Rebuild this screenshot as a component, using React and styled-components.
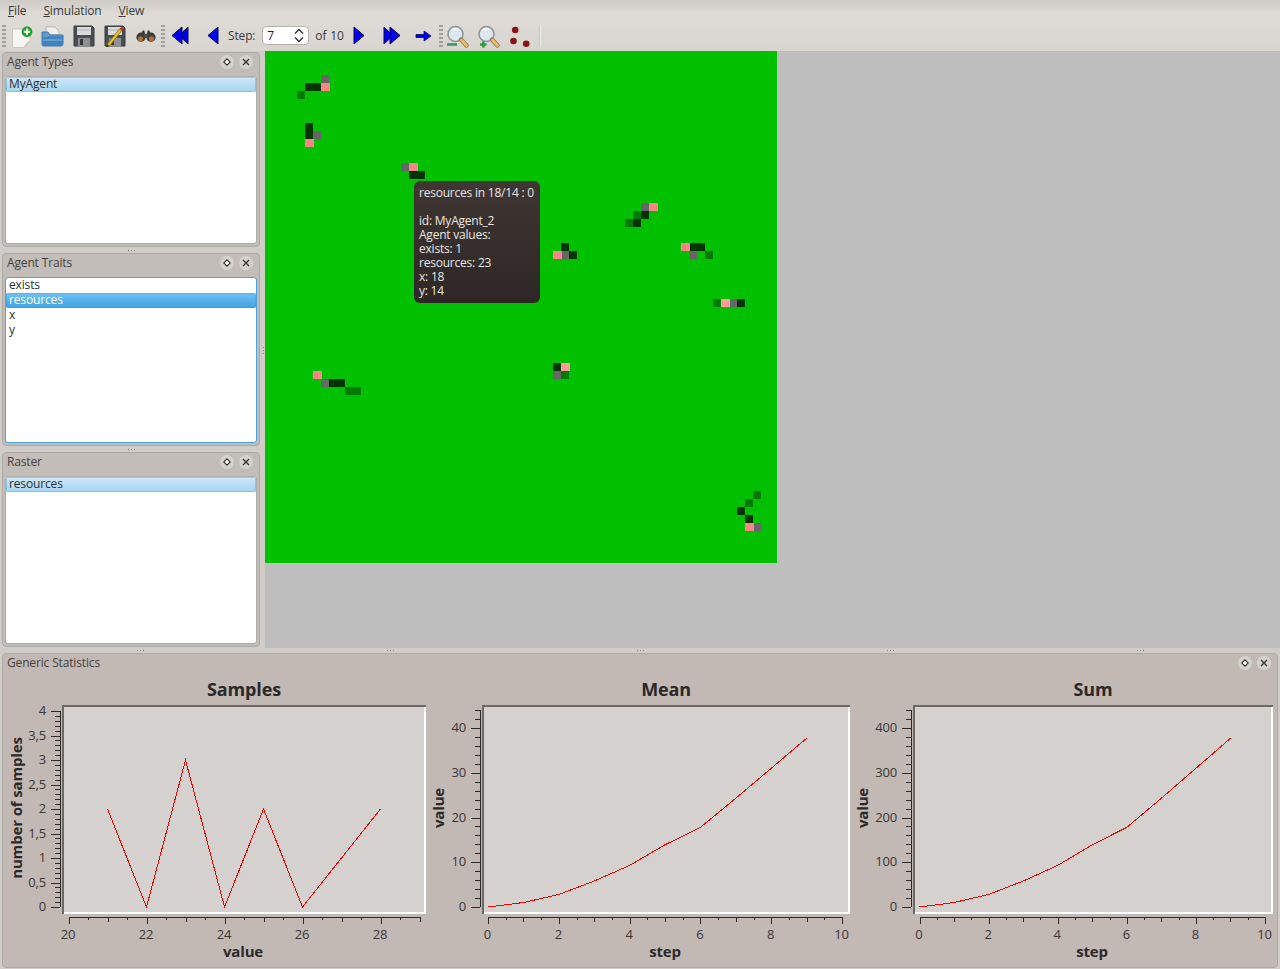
import styled, { createGlobalStyle } from "styled-components";

const GlobalStyle = createGlobalStyle`
  html, body {
    margin: 0;
    padding: 0;
    background: #d9d6d1;
  }
  * {
    box-sizing: border-box;
  }
`;

const Window = styled.div`
  width: 1280px;
  height: 969px;
  overflow: hidden;
  display: flex;
  flex-direction: column;
  background: #d0ccc7;
  font-family: "Open Sans", "Noto Sans", sans-serif;
  font-size: 12px;
  letter-spacing: -0.15px;
  color: #3c3a38;
`;

const MenuBar = styled.div`
  height: 22px;
  display: flex;
  align-items: center;
  padding-left: 8px;
  gap: 17px;
  background: linear-gradient(#cfccc8, #dedbd6 60%, #dedbd6);
`;

const MenuItem = styled.span`
  line-height: 22px;
`;

const Toolbar = styled.div`
  height: 29px;
  display: flex;
  align-items: center;
  padding: 0 0 2px 2px;
  background: linear-gradient(#dedbd6, #d8d5d0);
`;

const Handle = styled.div`
  width: 4px;
  height: 23px;
  background-image: radial-gradient(circle, #a19d98 0.8px, transparent 1px);
  background-size: 2px 4px;
`;

const ToolButton = styled.div`
  width: ${(p) => p.$w || 31}px;
  height: 26px;
  flex: none;
  display: flex;
  align-items: center;
  justify-content: center;
  margin-left: ${(p) => p.$ml || 0}px;
`;

const ToolLabel = styled.span`
  margin-left: ${(p) => p.$ml || 0}px;
  white-space: nowrap;
  word-spacing: 1px;
`;

const SpinBox = styled.div`
  width: 47px;
  height: 19px;
  margin-left: 7px;
  display: flex;
  align-items: center;
  justify-content: space-between;
  padding: 0 4px;
  background: #fff;
  border: 1px solid #b3afaa;
  border-radius: 4px;
  color: #222;
`;

const ToolSeparator = styled.div`
  width: 2px;
  height: 22px;
  margin-left: 3px;
  background: #c9c6c1;
  border-right: 1px solid #eeece9;
`;

const Main = styled.div`
  height: 597px;
  display: flex;
`;

const LeftColumn = styled.div`
  width: 261px;
  flex: none;
  padding: 1px 1px 0 2px;
  display: flex;
  flex-direction: column;
`;

const DockPanel = styled.section`
  height: ${(p) => p.$h}px;
  flex: none;
  display: flex;
  flex-direction: column;
  padding: 0 2px 2px;
  background: #c2bdb8;
  border: 1px solid #adaaa5;
  border-radius: 4px;
`;

const PanelHeader = styled.header`
  height: 23px;
  flex: none;
  display: flex;
  align-items: center;
  justify-content: space-between;
  padding: 0 4px 6px 2px;
  color: #45413e;
`;

const PanelButtons = styled.div`
  display: flex;
  gap: 5px;
`;

const PanelButton = styled.div`
  width: 14px;
  height: 14px;
  display: flex;
  align-items: center;
  justify-content: center;
  border-radius: 50%;
  background: #d5d2ce;
`;

const List = styled.div`
  flex: 1;
  padding: 0 0 1px;
  background: #fff;
  border: 1px solid ${(p) => (p.$focused ? "#4ba3df" : "#aeaaa6")};
  border-radius: 3px;
`;

const ListRow = styled.div`
  height: 15px;
  line-height: 13px;
  padding-left: 3px;
  border-radius: 2px;
  color: ${(p) => (p.$active ? "#fff" : "#2e2e2e")};
  background: ${(p) =>
    p.$active
      ? "linear-gradient(#6ec3f7, #3fa2e2)"
      : p.$selected
        ? "linear-gradient(#cfe8f9, #a4d5f4)"
        : "transparent"};
  box-shadow: ${(p) =>
    p.$active || p.$selected ? "inset 0 0 0 1px rgba(70, 150, 210, 0.35)" : "none"};
`;

const HSplit = styled.div`
  height: ${(p) => p.$h || 6}px;
  flex: none;
  display: flex;
  align-items: center;
  justify-content: ${(p) => (p.$wide ? "space-around" : "center")};
  padding: ${(p) => (p.$wide ? "0 15px" : "0")};
`;

const Grip = styled.div`
  width: 8px;
  height: 1px;
  background-image: radial-gradient(circle, #8e8a85 0.7px, transparent 1px);
  background-size: 3px 1px;
`;

const VSplit = styled.div`
  width: 4px;
  flex: none;
  display: flex;
  align-items: center;
  justify-content: center;
`;

const VGrip = styled.div`
  width: 1px;
  height: 8px;
  background-image: radial-gradient(circle, #8e8a85 0.7px, transparent 1px);
  background-size: 1px 3px;
`;

const Central = styled.div`
  flex: 1;
  position: relative;
  background: #bebebe;
`;

const Raster = styled.svg`
  display: block;
`;

const Tooltip = styled.div`
  position: absolute;
  left: 149px;
  top: 130px;
  width: 126px;
  height: 122px;
  padding: 5px 5px 4px;
  border-radius: 6px;
  background: linear-gradient(#403634, #2d2725);
  color: #e8e6e3;
  letter-spacing: -0.22px;
  line-height: 14px;
  white-space: pre;
`;

const BottomDock = styled.section`
  height: 315px;
  margin: 0 2px;
  flex: none;
  display: flex;
  flex-direction: column;
  background: #c2b8b4;
  border: 1px solid #adaaa5;
  border-radius: 4px;
`;

const DockHeader = styled(PanelHeader)`
  height: 19px;
  padding: 0 6px 2px 4px;
`;

const Charts = styled.div`
  display: flex;
  padding-top: 1px;
`;

const ChartSvg = styled.svg`
  display: block;
  flex: none;
  overflow: visible;
  font-family: "Open Sans", "Noto Sans", sans-serif;
`;

const cells = {
  dark: [[5, 4], [6, 4], [5, 9], [5, 10], [18, 15], [19, 15], [47, 20], [46, 21], [37, 24], [38, 25], [53, 24], [54, 24], [59, 31], [36, 39], [8, 41], [9, 41], [59, 57], [60, 58]],
  medium: [[4, 5], [46, 20], [45, 21], [55, 25], [56, 31], [37, 40], [10, 42], [11, 42], [61, 55], [60, 56]],
  grey: [[7, 3], [6, 10], [17, 14], [47, 19], [37, 25], [53, 25], [58, 31], [36, 40], [7, 41], [61, 59]],
  pink: [[7, 4], [5, 11], [18, 14], [48, 19], [36, 25], [52, 24], [6, 40], [60, 59]],
  lightPink: [[57, 31], [37, 39]],
};

const cellColors = {
  dark: "#003500",
  medium: "#007a00",
  grey: "#666666",
  pink: "#ff8585",
  lightPink: "#ff9c9c",
};

function RasterView() {
  return (
    <Raster width="512" height="512" shapeRendering="crispEdges">
      <rect width="512" height="512" fill="#00c000" />
      {Object.entries(cells).map(([kind, list]) =>
        list.map(([x, y]) => (
          <rect
            key={`${kind}-${x}-${y}`}
            x={x * 8}
            y={y * 8}
            width={kind === "pink" || kind === "lightPink" ? 9 : 8}
            height="8"
            fill={cellColors[kind]}
          />
        )),
      )}
    </Raster>
  );
}

function Triangle({ dir = "right", double }) {
  const flip = dir === "left" ? "translate(18 0) scale(-1 1)" : undefined;
  return (
    <svg width="18" height="20" viewBox="0 0 18 20">
      <g transform={flip} fill="#0000f5" stroke="#0a0a40" strokeWidth="1" strokeLinejoin="round">
        {double ? (
          <>
            <path d="M1 1 L10 9.5 L1 18 Z" />
            <path d="M7 1 L17 9.5 L7 18 Z" />
          </>
        ) : (
          <path d="M4 1 L14 9.5 L4 18 Z" />
        )}
      </g>
    </svg>
  );
}

function ArrowIcon() {
  return (
    <svg width="17" height="14" viewBox="0 0 17 14">
      <path d="M1 5.5 H9 V2 L16 7 L9 12 V8.5 H1 Z" fill="#0000f0" stroke="#0a0a50" strokeWidth="0.8" />
    </svg>
  );
}

function NewIcon() {
  return (
    <svg width="22" height="24" viewBox="0 0 22 24">
      <path d="M1.5 5 H19 V17 L13.5 23.5 H1.5 Z" fill="#f7f6f3" stroke="#c9c6c0" />
      <path d="M19 17 L13.5 23.5 Q15 18 19 17 Z" fill="#d8d5cf" stroke="#c9c6c0" />
      <circle cx="16" cy="7.7" r="5.4" fill="#20a52c" />
      <path d="M16 4.6 V10.8 M12.9 7.7 H19.1" stroke="#fff" strokeWidth="2" />
    </svg>
  );
}

function FolderIcon() {
  return (
    <svg width="23" height="22" viewBox="0 0 23 22">
      <path d="M5 2 H14 L18 6 V10 H5 Z" fill="#f1f0ee" stroke="#b9b7b3" />
      <path d="M1 7 H7 L9 10 H22 V19 Q22 21 20 21 H3 Q1 21 1 19 Z" fill="#5d9bd0" stroke="#3c75a8" />
      <path d="M1 13 L8 11.5 H22 V19 Q22 21 20 21 H3 Q1 21 1 19 Z" fill="#3f82bd" />
      <path d="M2 15 H21" stroke="#8dbce0" />
    </svg>
  );
}

function FloppyIcon({ pencil }) {
  return (
    <svg width="22" height="22" viewBox="0 0 22 22">
      <path d="M1 1 H19 L21 3 V21 H1 Z" fill="#4b4e50" stroke="#3a3d40" />
      <rect x="4" y="2" width="14" height="8" fill="#d9dadb" />
      <path d="M4 5 H18" stroke="#aeb0b2" />
      <rect x="5" y="13" width="12" height="8" fill="#8d9194" />
      <rect x="7" y="14" width="3" height="6" fill="#35383a" />
      {pencil && (
        <>
          <path d="M3 19.5 L15.5 4 L17.8 5.8 L5.2 21.3 Z" fill="#e8c020" stroke="#7a5e10" strokeWidth="0.7" />
          <path d="M15.5 4 L17.5 1.6 L19.8 3.4 L17.8 5.8 Z" fill="#d8342c" />
          <path d="M3 19.5 L2 22.5 L5.2 21.3 Z" fill="#30220e" />
        </>
      )}
    </svg>
  );
}

function BinocularsIcon() {
  return (
    <svg width="22" height="15" viewBox="0 0 24 18">
      <path d="M8 3 H10 L11 8 H13 L14 3 H16 L18 8 L11 9 L6 8 Z" fill="#333" />
      <circle cx="6" cy="11" r="5.5" fill="#3b3b3b" />
      <circle cx="18" cy="11" r="5.5" fill="#3b3b3b" />
      <circle cx="5.5" cy="13" r="3" fill="#b86f3a" />
      <circle cx="18.5" cy="13" r="3" fill="#b86f3a" />
      <rect x="9" y="7" width="6" height="5" fill="#4c4c4c" />
    </svg>
  );
}

function ZoomIcon({ plus }) {
  return (
    <svg width="24" height="24" viewBox="0 0 24 24">
      <circle cx="9.5" cy="10" r="7.5" fill="#dbe8ee" stroke="#8f9599" strokeWidth="1.6" />
      <path d="M5 7 Q8 4 12 5" stroke="#fff" strokeWidth="1.5" fill="none" />
      <path d="M15 15.5 L20.5 21.5" stroke="#8b7a55" strokeWidth="4.4" strokeLinecap="round" />
      <path d="M15.5 16 L20.5 21.5" stroke="#eebc63" strokeWidth="2.8" strokeLinecap="round" />
      {plus ? (
        <path d="M6.3 17.2 V23.8 M3 20.5 H9.6" stroke="#2e9a44" strokeWidth="2.4" />
      ) : (
        <path d="M1 20.5 H11" stroke="#3a9a5a" strokeWidth="2.6" />
      )}
    </svg>
  );
}

function DotsIcon() {
  return (
    <svg width="22" height="22" viewBox="0 0 22 22">
      <circle cx="6.2" cy="5" r="3.3" fill="#8a1414" />
      <circle cx="4.5" cy="16" r="3.3" fill="#8a1414" />
      <circle cx="17.2" cy="18.7" r="3.3" fill="#8a1414" />
    </svg>
  );
}

function SpinArrows() {
  return (
    <svg width="10" height="15" viewBox="0 0 10 15">
      <path d="M1 5.5 L5 1.5 L9 5.5 M1 9.5 L5 13.5 L9 9.5" fill="none" stroke="#333" strokeWidth="1.4" />
    </svg>
  );
}

function FloatIcon() {
  return (
    <svg width="8" height="8" viewBox="0 0 8 8">
      <path d="M4 0.8 L7.2 4 L4 7.2 L0.8 4 Z" fill="#fff" stroke="#333" strokeWidth="1.1" />
    </svg>
  );
}

function CloseIcon() {
  return (
    <svg width="8" height="8" viewBox="0 0 8 8">
      <path d="M1 1 L7 7 M7 1 L1 7" stroke="#333" strokeWidth="1.3" />
    </svg>
  );
}

function Panel({ title, height, focused, children }) {
  return (
    <DockPanel $h={height}>
      <PanelHeader>
        {title}
        <PanelButtons>
          <PanelButton><FloatIcon /></PanelButton>
          <PanelButton><CloseIcon /></PanelButton>
        </PanelButtons>
      </PanelHeader>
      <List $focused={focused}>{children}</List>
    </DockPanel>
  );
}

function range(from, to, step) {
  const out = [];
  const count = Math.floor((to - from) / step + 1e-6);
  for (let i = 0; i <= count; i++) out.push(from + i * step);
  return out;
}

const isMultiple = (v, step) => Math.abs(v / step - Math.round(v / step)) < 1e-6;

function Chart({ left, width, title, xName, yName, yNameX, plot, xAxis, yAxis, points }) {
  const xAt = (v) => xAxis.origin + xAxis.scale * (v - xAxis.from);
  const yAt = (v) => 907 - yAxis.scale * v;
  const axisX = plot.x - 2;
  const axisY = 917;
  const line = points.map(([x, y]) => `${xAt(x)},${yAt(y)}`).join(" ");

  return (
    <ChartSvg width={width} height="291" viewBox={`${left} 674 ${width} 291`}>
      <text x={xAxis.titleX} y="696" textAnchor="middle" fontSize="18" fontWeight="700" fill="#2b2928">
        {title}
      </text>

      <rect x={plot.x} y="705" width={plot.w} height="209" fill="#d5d1ce" />
      <g shapeRendering="crispEdges" fill="none" strokeWidth="2">
        <path d={`M${plot.x + plot.w - 1} 705 V913 H${plot.x}`} stroke="#fff" />
        <path d={`M${plot.x + 1} 914 V706 H${plot.x + plot.w}`} stroke="#6c6863" />
      </g>

      <polyline points={line} fill="none" stroke="#ff0000" strokeWidth="1" shapeRendering="crispEdges" />

      <g stroke="#2c2a29" strokeWidth="1" shapeRendering="crispEdges">
        <path d={`M${axisX + 0.5} ${yAt(yAxis.to)} V${yAt(0)}`} />
        {range(0, yAxis.to, yAxis.minor).map((v) => {
          const y = Math.round(yAt(v)) + 0.5;
          return (
            <path key={v} d={`M${axisX - (isMultiple(v, yAxis.major) ? 9 : 5)} ${y} H${axisX}`} />
          );
        })}
        <path d={`M${xAt(xAxis.from)} ${axisY + 0.5} H${xAt(xAxis.to)}`} />
        {range(xAxis.from, xAxis.to, 0.5).map((v) => {
          const x = Math.round(xAt(v)) + 0.5;
          const len = isMultiple(v, 2) ? 7 : isMultiple(v, 1) ? 5 : 3;
          return <path key={v} d={`M${x} ${axisY} V${axisY + len}`} />;
        })}
      </g>

      <g fontSize="13" fill="#3a3734">
        {range(0, yAxis.to, yAxis.major).map((v) => (
          <text key={v} x={axisX - 14} y={yAt(v) + 4} textAnchor="end">
            {String(v).replace(".", ",")}
          </text>
        ))}
        {range(xAxis.from, xAxis.to, 2).map((v) => (
          <text key={v} x={xAt(v) - 0.5} y="939" textAnchor="middle">
            {v}
          </text>
        ))}
      </g>

      <g fontSize="15" fontWeight="700" fill="#2b2928">
        <text x={xAxis.titleX - 1} y="957" textAnchor="middle">{xName}</text>
        <text transform={`translate(${yNameX} 808) rotate(-90)`} textAnchor="middle">{yName}</text>
      </g>
    </ChartSvg>
  );
}

const sumPoints = [[0, 0], [1, 10], [2, 28], [3, 58], [4, 93], [5, 139], [6, 178], [7, 243], [8, 310], [9, 377]];

const tooltipText = `resources in 18/14 : 0

id: MyAgent_2
Agent values:
exists: 1
resources: 23
x: 18
y: 14`;

export default function App() {
  return (
    <Window>
      <GlobalStyle />
      <MenuBar>
        <MenuItem><u>F</u>ile</MenuItem>
        <MenuItem><u>S</u>imulation</MenuItem>
        <MenuItem><u>V</u>iew</MenuItem>
      </MenuBar>
      <Toolbar>
        <Handle />
        <ToolButton><NewIcon /></ToolButton>
        <ToolButton><FolderIcon /></ToolButton>
        <ToolButton><FloppyIcon /></ToolButton>
        <ToolButton><FloppyIcon pencil /></ToolButton>
        <ToolButton><BinocularsIcon /></ToolButton>
        <Handle />
        <ToolButton $w={30}><Triangle dir="left" double /></ToolButton>
        <ToolButton $w={28} $ml={4}><Triangle dir="left" /></ToolButton>
        <ToolLabel $ml={1}>Step:</ToolLabel>
        <SpinBox>7<SpinArrows /></SpinBox>
        <ToolLabel $ml={6}>of 10</ToolLabel>
        <ToolButton $w={30}><Triangle /></ToolButton>
        <ToolButton $w={32} $ml={2}><Triangle double /></ToolButton>
        <ToolButton $w={30} $ml={1}><ArrowIcon /></ToolButton>
        <Handle />
        <ToolButton><ZoomIcon /></ToolButton>
        <ToolButton><ZoomIcon plus /></ToolButton>
        <ToolButton><DotsIcon /></ToolButton>
        <ToolSeparator />
      </Toolbar>

      <Main>
        <LeftColumn>
          <Panel title="Agent Types" height={195}>
            <ListRow $selected>MyAgent</ListRow>
          </Panel>
          <HSplit><Grip /></HSplit>
          <Panel title="Agent Traits" height={193} focused>
            <ListRow>exists</ListRow>
            <ListRow $active>resources</ListRow>
            <ListRow>x</ListRow>
            <ListRow>y</ListRow>
          </Panel>
          <HSplit><Grip /></HSplit>
          <Panel title="Raster" height={195}>
            <ListRow $selected>resources</ListRow>
          </Panel>
        </LeftColumn>
        <VSplit><VGrip /></VSplit>
        <Central>
          <RasterView />
          <Tooltip>{tooltipText}</Tooltip>
        </Central>
      </Main>

      <HSplit $h={5} $wide>
        <Grip /><Grip /><Grip /><Grip /><Grip />
      </HSplit>

      <BottomDock>
        <DockHeader>
          Generic Statistics
          <PanelButtons>
            <PanelButton><FloatIcon /></PanelButton>
            <PanelButton><CloseIcon /></PanelButton>
          </PanelButtons>
        </DockHeader>
        <Charts>
          <Chart
            left={3}
            width={427}
            title="Samples"
            xName="value"
            yName="number of samples"
            yNameX={22}
            plot={{ x: 62, w: 364 }}
            xAxis={{ from: 20, to: 29, origin: 68.5, scale: 39, titleX: 244 }}
            yAxis={{ to: 4, scale: 49, major: 0.5, minor: 0.1 }}
            points={[[21, 2], [22, 0], [23, 3], [24, 0], [25, 2], [26, 0], [27, 1], [28, 2]]}
          />
          <Chart
            left={430}
            width={426}
            title="Mean"
            xName="step"
            yName="value"
            yNameX={444}
            plot={{ x: 482, w: 368 }}
            xAxis={{ from: 0, to: 10, origin: 488, scale: 35.4, titleX: 666 }}
            yAxis={{ to: 44, scale: 4.475, major: 10, minor: 2 }}
            points={sumPoints.map(([x, y]) => [x, y / 10])}
          />
          <Chart
            left={856}
            width={421}
            title="Sum"
            xName="step"
            yName="value"
            yNameX={868}
            plot={{ x: 913, w: 360 }}
            xAxis={{ from: 0, to: 10, origin: 919.5, scale: 34.55, titleX: 1093 }}
            yAxis={{ to: 440, scale: 0.4475, major: 100, minor: 20 }}
            points={sumPoints}
          />
        </Charts>
      </BottomDock>
    </Window>
  );
}
